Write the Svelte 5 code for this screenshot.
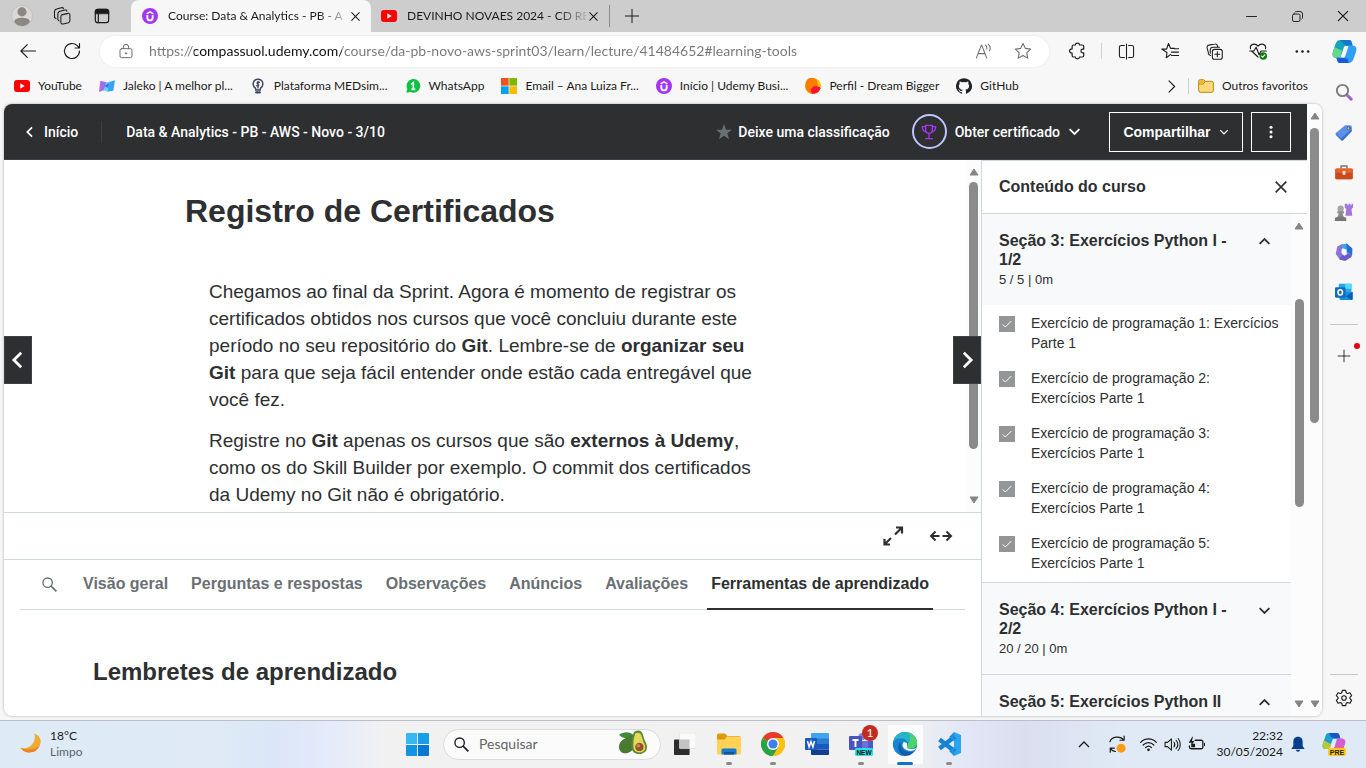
<script>
  const browserTabs = [
    { icon: 'udemy', title: 'Course: Data & Analytics - PB - A', active: true },
    { icon: 'youtube', title: 'DEVINHO NOVAES 2024 - CD RE', active: false }
  ];

  const bookmarks = [
    { icon: 'youtube', label: 'YouTube' },
    { icon: 'jaleko', label: 'Jaleko | A melhor pl...' },
    { icon: 'bulb', label: 'Plataforma MEDsim...' },
    { icon: 'whatsapp', label: 'WhatsApp' },
    { icon: 'microsoft', label: 'Email – Ana Luiza Fr...' },
    { icon: 'udemy', label: 'Início | Udemy Busi...' },
    { icon: 'dream', label: 'Perfil - Dream Bigger' },
    { icon: 'github', label: 'GitHub' }
  ];

  const courseTabs = ['Visão geral', 'Perguntas e respostas', 'Observações', 'Anúncios', 'Avaliações', 'Ferramentas de aprendizado'];
  let activeTab = $state('Ferramentas de aprendizado');

  const sections = [
    {
      title: 'Seção 3: Exercícios Python I - 1/2',
      meta: '5 / 5 | 0m',
      open: true,
      items: [
        'Exercício de programação 1: Exercícios\nParte 1',
        'Exercício de programação 2:\nExercícios Parte 1',
        'Exercício de programação 3:\nExercícios Parte 1',
        'Exercício de programação 4:\nExercícios Parte 1',
        'Exercício de programação 5:\nExercícios Parte 1'
      ]
    },
    { title: 'Seção 4: Exercícios Python I - 2/2', meta: '20 / 20 | 0m', open: false, items: [] },
    { title: 'Seção 5: Exercícios Python II', meta: '', open: true, items: [] }
  ];

  const edgeTools = [
    ['search', 'Pesquisar'],
    ['tag', 'Compras'],
    ['toolbox', 'Ferramentas'],
    ['chess', 'Jogos'],
    ['m365', 'Microsoft 365'],
    ['outlook', 'Outlook']
  ];

  const taskApps = [
    { icon: 'taskview', name: 'Visão de tarefas', running: false },
    { icon: 'explorer', name: 'Explorador de Arquivos', running: true },
    { icon: 'chrome', name: 'Google Chrome', running: true },
    { icon: 'word', name: 'Word', running: false },
    { icon: 'teams', name: 'Teams', running: true },
    { icon: 'edge', name: 'Microsoft Edge', running: true, focused: true },
    { icon: 'vscode', name: 'Visual Studio Code', running: true }
  ];
</script>

{#snippet icon(name, size = 16)}
  <svg width={size} height={size} viewBox="0 0 24 24" fill="none" stroke="currentColor" stroke-width="1.5" stroke-linecap="round" stroke-linejoin="round" aria-hidden="true">
    {#if name === 'udemy'}
      <circle cx="12" cy="12" r="12" fill="#a435f0" stroke="none" />
      <path d="M8 10.500v4a4 4 0 0 0 8 0v-4" stroke="#fff" stroke-width="2.800" stroke-linecap="butt" />
      <path d="M7 8.800 12 5.800l5 3" stroke="#fff" stroke-width="2.200" stroke-linecap="butt" stroke-linejoin="miter" />
    {:else if name === 'youtube'}
      <rect x="0" y="3" width="24" height="18" rx="4.500" fill="#f00" stroke="none" />
      <path d="m9.500 8 6.500 4-6.500 4z" fill="#fff" stroke="none" />
    {:else if name === 'jaleko'}
      <path d="M2 4 11 6.500 8.500 18 0 21z" fill="#a56bef" stroke="none" />
      <path d="M15 6 24 3.500 21.500 19 12 20.500z" fill="#35a4f5" stroke="none" />
      <path d="M11 6.500 16 5.500 13 20.500 7 18z" fill="#5fd9f2" stroke="none" /><path d="m8 12 7-5-1 8z" fill="#3f6ff0" stroke="none" />
    {:else if name === 'bulb'}
      <path d="M8.500 18v-2.500C2 11 4.500 2 12 2s10 9 3.500 13.500V18z" fill="#fff" stroke="#3d4663" stroke-width="2.200" />
      <path d="M9.500 21.500h5" stroke="#3d4663" stroke-width="3.500" />
      <path d="M14.200 6.500c-3-1.500-5 1-2.500 2.500s1.500 4-2 2.500M12 5v10" stroke="#3d4663" stroke-width="2" />
    {:else if name === 'whatsapp'}
      <path d="M2 22 3.500 16.500A10.300 10.300 0 1 1 8 21z" fill="#0dc143" stroke="none" />
      <path d="M9 9.500 12.500 7v10M9.500 17h6" stroke="#fff" stroke-width="2.400" stroke-linecap="butt" stroke-linejoin="miter" />
    {:else if name === 'microsoft'}
      <g stroke="none"><path d="M0 0h11.500v11.500H0z" fill="#f4511e" /><path d="M12.500 0H24v11.500H12.500z" fill="#7cb900" /><path d="M0 12.500h11.500V24H0z" fill="#00a1f1" /><path d="M12.500 12.500H24V24H12.500z" fill="#ffb900" /></g>
    {:else if name === 'dream'}
      <circle cx="12" cy="12" r="12" fill="#ffc400" stroke="none" />
      <path d="M1 9a9 9 0 0 1 18-1c1 7-3 12-10 15.500A12 12 0 0 1 1 9z" fill="#ff7a00" stroke="none" />
      <path d="M10 22c-3-5 1-10 7-9.500 3 .3 5 .500 6.500 3A12 12 0 0 1 10 23.500z" fill="#ff1030" stroke="none" />
    {:else if name === 'github'}
      <path fill="#1f2328" stroke="none" d="M12 .3a12 12 0 0 0-3.800 23.400c.6.100.8-.3.800-.6v-2c-3.300.7-4-1.600-4-1.600-.6-1.400-1.400-1.800-1.400-1.800-1-.7.1-.7.1-.7 1.200 0 1.900 1.200 1.900 1.200 1 1.800 2.800 1.300 3.500 1 0-.8.400-1.300.7-1.600-2.700-.3-5.500-1.300-5.500-6 0-1.200.5-2.300 1.300-3.100-.2-.4-.6-1.600 0-3.200 0 0 1-.3 3.400 1.200a11.500 11.500 0 0 1 6 0c2.300-1.500 3.300-1.200 3.300-1.200.6 1.600.2 2.800 0 3.200.9.800 1.300 1.900 1.300 3.200 0 4.600-2.800 5.600-5.500 5.900.5.400.9 1 .9 2.200v3.300c0 .3.100.7.800.6A12 12 0 0 0 12 .3" />
    {:else if name === 'folder'}
      <path d="M1 8V5a2.500 2.500 0 0 1 2.500-2.500h5L11 5h9.500A2.500 2.500 0 0 1 23 7.500V19a2.500 2.500 0 0 1-2.500 2.500h-17A2.500 2.500 0 0 1 1 19z" fill="#ffd979" stroke="#b98610" />
      <path d="M1 9h7l3-4" stroke="#b98610" /><path d="M2 8V5l1.500-1.500h5l1.200 2L7.500 8z" fill="#f2b82c" stroke="none" />
    {:else if name === 'avatar'}
      <circle cx="12" cy="12" r="11.500" fill="#dad9d6" stroke="#c2c1bf" stroke-width="1" /><circle cx="12" cy="7.500" r="5" fill="#8b8884" stroke="none" /><path d="M3.500 18.500c0-6 17-6 17 0A11 11 0 0 1 12 23a11 11 0 0 1-8.500-4.500" fill="#8b8884" stroke="none" />
    {:else if name === 'workspaces'}
      <path stroke-width="1.400" d="M11.500 10.500 20 8.500a2 2 0 0 1 2.500 2v7.500c0 1.500-.5 2.500-2 2.900l-7 1.700a2.200 2.200 0 0 1-3-2v-8c0-1 .2-1.800 1-2.100M8 18.500 6.500 17V9c0-1.500.5-2.500 2-3l7-2c1.500-.4 2.700.2 3 1.500M4 15.500 2 14V6c0-1.500.5-2.500 2-3l7-2c1.500-.4 2.700.2 3 1.300" />
    {:else if name === 'tabactions'}
      <rect x="2" y="2" width="20" height="20" rx="3.500" stroke-width="1.800" /><path d="M2 8V5.500A3.500 3.500 0 0 1 5.500 2h13A3.500 3.500 0 0 1 22 5.500V8z" fill="currentColor" /><path d="M6.500 8v14" stroke-width="1.800" />
    {:else if name === 'close'}
      <path d="m5 5 14 14M19 5 5 19" stroke-width="1.900" />
    {:else if name === 'bigclose'}
      <path d="m4 4 16 16M20 4 4 20" stroke-width="2.400" stroke-linecap="butt" />
    {:else if name === 'plus'}
      <path d="M12 2v20M2 12h20" />
    {:else if name === 'minimize'}
      <path d="M4 12h16" />
    {:else if name === 'restore'}
      <rect x="4" y="8" width="12" height="12" rx="2.500" /><path d="M8 5c.5-.8 1-1 2-1h6a4 4 0 0 1 4 4v6c0 1-.3 1.500-1 2" />
    {:else if name === 'back'}
      <path d="M22 12H3M11 3.500 2.500 12l8.500 8.500" />
    {:else if name === 'reload'}
      <path d="M22 12a10 10 0 1 1-3-7.100L22 8M22 2v6h-6" />
    {:else if name === 'lock'}
      <rect x="3" y="8.500" width="18" height="13.500" rx="2.500" /><path d="M8 8.500V6a4 4 0 0 1 8 0v2.500" /><circle cx="12" cy="15.500" r="1" fill="currentColor" />
    {:else if name === 'read'}
      <path d="M2 21 9 3h.5l7 18M4.500 15h9.500M15 3c1.500 1.500 2 3.500 1.500 5.500M18.500 1.500C21.500 4 22 8 20.500 11" />
    {:else if name === 'star'}
      <path d="m12 2 3.100 6.500 7 1-5.100 4.900 1.300 7.100-6.300-3.400-6.300 3.400L7 14.400 1.900 9.500l7-1z" />
    {:else if name === 'starfill'}
      <path fill="currentColor" stroke="none" d="m12 0 3.200 8.500H24l-7 5.300 2.600 9.200L12 17.500 4.400 23 7 13.800 0 8.500h8.800z" />
    {:else if name === 'puzzle'}
      <path stroke-width="1.600" d="M7.500 4h2.300c.2-3.300 5.400-3.300 5.600 0H19a2 2 0 0 1 2 2v3.500h-1.500c-3 0-3 5 0 5H21V18a2 2 0 0 1-2 2h-3.600c-.2 3.300-5.400 3.300-5.600 0H7.500a2 2 0 0 1-2-2v-3.200c-4.500.2-4.500-5.800 0-5.600V6a2 2 0 0 1 2-2z" />
    {:else if name === 'split'}
      <path d="M9 3.500H4.500A2.500 2.500 0 0 0 2 6v12a2.500 2.500 0 0 0 2.500 2.500H9M15 3.500h4.500A2.500 2.500 0 0 1 22 6v12a2.500 2.500 0 0 1-2.500 2.500H15M12 1.500v21" />
    {:else if name === 'favlist'}
      <path d="M13 16.500 7 21l1-7L1 9.500h6.500L10 2l2.800 6.500H18M14 13.500h9.500M14 18h9.500M18 9h5.500" />
    {:else if name === 'collections'}
      <rect x="9" y="9" width="14" height="14" rx="3" /><path d="M16 12.500v7M12.500 16h7" /><path d="M6.500 17.500 5 17a3 3 0 0 1-1.700-3.500L1.500 6.500A3 3 0 0 1 4 3l8.500-1.500A3 3 0 0 1 16 3.500l.7 2.500M6 14.500V10a4 4 0 0 1 4-4h9" />
    {:else if name === 'health'}
      <path d="M12 20 3.500 12M2 9c-1.500-6 6-8.500 10-3.500C16 .5 23.500 3 22 9M1 12h5.500L9.500 7l4 10 2.500-5h7" /><circle cx="19" cy="18.500" r="5" fill="#107c10" stroke="none" /><path d="m16.800 18.700 1.500 1.500 2.700-3" stroke="#fff" />
    {:else if name === 'dots'}
      <g fill="currentColor" stroke="none"><circle cx="4" cy="12" r="1.800" /><circle cx="12" cy="12" r="1.800" /><circle cx="20" cy="12" r="1.800" /></g>
    {:else if name === 'vdots'}
      <g fill="currentColor" stroke="none"><circle cx="12" cy="4" r="2.600" /><circle cx="12" cy="12" r="2.600" /><circle cx="12" cy="20" r="2.600" /></g>
    {:else if name === 'copilot'}
      <g stroke="none"><path d="M8 1h8.500c1.500 0 2 1 2.500 2.500l.8 3H14c-2 0-2.500 1-3 2.500L8 18H4C.5 18 0 15.500 1 12L3.500 4.500C4.500 2 6 1 8 1" fill="#14a5ba" /><path d="M1 12 2.500 8l7 3L8 18H4C.5 18 0 15.500 1 12" fill="#65d88c" /><path d="M8 1h8.500c1.500 0 2 1 2.500 2.500l.8 3H14L11 4.500z" fill="#1279cf" /><path d="M16 23H7.500C6 23 5.500 22 5 20.500L4.200 18H10c2 0 2.500-1 3-2.500l3-9h4c3.500 0 4 2.500 3 6l-2.500 7c-1 2.500-2.500 3.500-4.500 3.500" fill="#2f9ff1" /><path d="M16 23H7.500C6 23 5.500 22 5 20.500L4.200 18H10l5 1z" fill="#175bd6" /></g>
    {:else if name === 'copilotpre'}
      <g stroke="none"><path d="M7 1h8c1.500 0 2 1 2.500 2.500l.8 3H13c-2 0-2.500 1-3 2.500l-2.500 8H4C.5 17 0 15 1 11.500l2.300-7C4 2 5 1 7 1" fill="#1a9fd1" /><path d="M7 1h8c1.500 0 2 1 2.500 2.500l.8 3H13L9 5z" fill="#1857c9" /><path d="m1 11.500 1-3 7 3.500-1.500 5H4C.5 17 0 15 1 11.500" fill="#b3cb3a" /><path d="M15 21H9l3.500-6 2.500-8.500h5c3 0 4 2.500 3 5.500l-2 6c-1 2.500-3 3-6 3" fill="#d460cf" /><path d="m13 15 9-.5-1 4c-1 2-3 2.500-6 2.500H9z" fill="#ee6a7a" /><rect x="6" y="16" width="18" height="8" rx="2" fill="#ffc91c" /></g>
      <text x="15" y="22.700" font-family="Liberation Sans" font-size="7" font-weight="700" fill="#222" stroke="none" text-anchor="middle">PRE</text>
    {:else if name === 'search'}
      <path d="m16 16 5.500 5.500" stroke="#9b62d6" stroke-width="4" /><circle cx="10" cy="10" r="7.500" stroke="#7d7d7d" stroke-width="2.600" />
    {:else if name === 'tag'}
      <path d="M13.500 3H20a2.500 2.500 0 0 1 2.500 2.500V11L11 22.500a2 2 0 0 1-3 0L1.500 16a2 2 0 0 1 0-3z" fill="#5c92e6" stroke="none" /><path d="M1.500 14 8 20.500 22 8v3L11 22.500a2 2 0 0 1-3 0L1.500 16z" fill="#3b70cc" stroke="none" /><circle cx="18" cy="7" r="2" fill="#f2c14a" stroke="#294f95" stroke-width="1" />
    {:else if name === 'toolbox'}
      <path d="M8 7V4h8v3" stroke="#777" stroke-width="2" /><rect x="0" y="7" width="24" height="14.500" rx="2" fill="#e8602b" stroke="none" /><path d="M1 13h22v6.500a2 2 0 0 1-2 2H3a2 2 0 0 1-2-2z" fill="#c94a1c" stroke="none" /><rect x="10" y="10.500" width="4" height="5" rx="1" fill="#f3e5dc" stroke="none" />
    {:else if name === 'chess'}
      <g stroke="none"><path d="M14 1h2.500v2H18V1h2.500v2H22V1h2v5l-2 2 1 9H14l1-9-2-2V1z" fill="#a277dd" /><circle cx="7.500" cy="7.500" r="4.200" fill="#a5a5a5" /><path d="M3 11h9v2.500h-2L11.500 19h-8L5 13.500H3z" fill="#8b8b8b" /><path d="M0 19.500q7.500-3 15 0V24H0z" fill="#777" /></g>
    {:else if name === 'm365'}
      <path d="M9 2 16 .5l7 7-.5 9.500-7-3V9l-5-2-5.500 4V5z" fill="#39a4e8" stroke="none" /><path d="M10 1 3 4.500 1 14.500 7 23l3.500-6-2-5 .5-4z" fill="#8a74d8" stroke="none" /><path d="M6 22 9.500 15l3 2 4-2.500 6 .500-.5 3.500-8.500 5.500z" fill="#6a5bcb" stroke="none" /><path d="m15 .5 8 6.500v9l-7-4V8z" fill="#2b6bd4" stroke="none" />
    {:else if name === 'outlook'}
      <g stroke="none"><rect x="5" y="1" width="17" height="13" rx="1" fill="#28a8ea" /><path d="M13.500 1H22v7h-8.500z" fill="#50d9ff" /><path d="M6 12h17.500v9a1.500 1.500 0 0 1-1.500 1.500H7.500A1.500 1.500 0 0 1 6 21z" fill="#1490df" /><path d="m23.500 12-9 5.500 7.500 5 1.500-.5z" fill="#0a5bb5" /><rect x="0" y="5.500" width="14" height="14" rx="1.500" fill="#0f6cbd" /></g><ellipse cx="7" cy="12.500" rx="3" ry="3.400" stroke="#fff" stroke-width="2" />
    {:else if name === 'gear'}
      <circle cx="12" cy="12" r="3" /><path d="m9.800 1.800h4.400l.8 3.200 1.800 1 3.200-.9 2.200 3.800-2.300 2.400v1.400l2.300 2.400-2.200 3.800-3.200-.9-1.800 1-.8 3.200H9.800L9 19l-1.800-1-3.200.9-2.200-3.800 2.300-2.400v-1.400L1.800 8.900 4 5.100l3.200.9L9 5z" />
    {:else if name === 'left'}
      <path d="m15.500 4-8 8 8 8" stroke-width="3" stroke-linecap="butt" stroke-linejoin="miter" />
    {:else if name === 'right'}
      <path d="m8.500 4 8 8-8 8" stroke-width="3" stroke-linecap="butt" stroke-linejoin="miter" />
    {:else if name === 'thinright'}
      <path d="m8 3 9 9-9 9" stroke-width="1.800" />
    {:else if name === 'down'}
      <path d="m3 7.500 9 9 9-9" stroke-width="3.200" stroke-linecap="butt" stroke-linejoin="miter" />
    {:else if name === 'up'}
      <path d="m3 16.500 9-9 9 9" stroke-width="3.200" stroke-linecap="butt" stroke-linejoin="miter" />
    {:else if name === 'trophy'}
      <path d="M7 2h10v7a5 5 0 0 1-10 0zM7 4H2c0 5 1.500 7 6 8M17 4h5c0 5-1.500 7-6 8M12 14v7M7 22h10" stroke="#a435f0" stroke-width="2" stroke-linejoin="miter" />
    {:else if name === 'expand'}
      <path d="M15 3.500h6v6M20.500 4 14 10.500M9 20.500H3.500V15M4 20l6-6" stroke-width="2.200" stroke-linecap="butt" stroke-linejoin="miter" />
    {:else if name === 'wide'}
      <path d="M10.500 12H2.500M6.500 7.500 2 12l4.500 4.500M13.500 12h8M17.500 7.500 22 12l-4.500 4.500" stroke-width="2" stroke-linecap="butt" stroke-linejoin="miter" />
    {:else if name === 'magnify'}
      <circle cx="9" cy="9" r="7.500" stroke-width="2.200" /><path d="m14 14 9 9" stroke-width="2.800" stroke-linecap="butt" />
    {:else if name === 'check'}
      <path d="m5.500 12.500 4 4L18.500 7.500" stroke="#fff" stroke-width="1.500" stroke-linecap="butt" stroke-linejoin="miter" />
    {:else if name === 'moon'}
      <path d="M15.500.5A12 12 0 0 1 .5 16a12 12 0 0 0 21-2.500C24.500 8 21 2 15.500.5" fill="#f0ab35" stroke="none" /><path d="M.5 16a12 12 0 0 0 21-2.500C17 18 8 19 .5 16" fill="#ec8326" stroke="none" />
    {:else if name === 'windows'}
      <g stroke="none" fill="#0a84da"><path d="M0 1a1 1 0 0 1 1-1h10.500v11.500H0z" fill="#36b8f3" /><path d="M12.500 0H23a1 1 0 0 1 1 1v10.500H12.500z" fill="#189de7" /><path d="M0 12.500h11.500V24H1a1 1 0 0 1-1-1z" fill="#1294e2" /><path d="M12.500 12.500H24V23a1 1 0 0 1-1 1H12.500z" fill="#0878d0" /></g>
    {:else if name === 'avocado'}
      <g stroke="none"><path d="M0 4C4 1 10 1 13 5c-4 3-9 3-13-1" fill="#3d8b3d" /><path d="M12 4C5 7 0 9 0 14.500c0 6 7 7 11 3 4-4 1-8 1-13.500" fill="#4a7a31" /><path d="M13 1.500c4-2 7-1 8 4 1 4 3 6 3 9.500 0 7-12 7.500-13 1-.5-5 0-11 2-14.500" fill="#5d8a2e" /><path d="M14 3c3-1.500 5 0 6 4 .8 4 2.500 5 2.500 8 0 5.500-9.500 5.500-10 .5-.3-4 0-9.500 1.500-12.500" fill="#e3d95d" /><circle cx="17.500" cy="14.500" r="3.600" fill="#96532a" /><circle cx="16.500" cy="13.500" r="1.500" fill="#c98a58" /></g>
    {:else if name === 'taskview'}
      <rect x="0" y="7" width="17" height="17" rx="1" fill="#2d2d2d" stroke="none" /><rect x="6" y="0" width="18" height="17" rx="1" fill="#fafafa" stroke="#dcdcdc" stroke-width=".6" /><path d="M6 7h11v10H6z" fill="#c4c4c4" stroke="none" />
    {:else if name === 'explorer'}
      <g stroke="none"><path d="M0 3a1.500 1.500 0 0 1 1.500-1.500H8L10.500 4H22a1.500 1.500 0 0 1 1.500 1.500V10H0z" fill="#dd9b0c" /><path d="M0 7.500h7.500L10 4.500h12.500A1.500 1.500 0 0 1 24 6v15a1.500 1.500 0 0 1-1.500 1.500h-21A1.500 1.500 0 0 1 0 21z" fill="#ffd154" /><path d="M4.500 22.500V18A1.500 1.500 0 0 1 6 16.500h12a1.500 1.500 0 0 1 1.500 1.500v4.500z" fill="#1179ce" /><path d="M7 20h10v2.500H7z" fill="#0a559e" /></g>
    {:else if name === 'chrome'}
      <g stroke="none"><circle cx="12" cy="12" r="12" fill="#fbc116" /><path d="M12 12 1.600 6a12 12 0 0 1 20.800 0z" fill="#e33b2e" /><path d="M1.600 6 12 24A12 12 0 0 1 1.600 6" fill="#26a147" /><path d="M1.600 6 7 15.500l5 8.500 5.500-9z" fill="#26a147" /><path d="M12 6h10.400A12 12 0 0 1 12 24l5.300-9z" fill="#fbc116" /><circle cx="12" cy="12" r="6" fill="#fff" /><circle cx="12" cy="12" r="4.600" fill="#3e7fee" /></g>
    {:else if name === 'word'}
      <g stroke="none"><path d="M7 1h16a1 1 0 0 1 1 1v5H6V2a1 1 0 0 1 1-1" fill="#41a5ee" /><path d="M6 6.500h18V12H6z" fill="#2b7cd3" /><path d="M6 12h18v5.500H6z" fill="#185abd" /><path d="M6 17.500h18V22a1 1 0 0 1-1 1H7a1 1 0 0 1-1-1z" fill="#103f91" /><rect x="0" y="6" width="12" height="12" rx="1" fill="#185abd" /></g><path d="m2.500 9 1.600 6L6 9.500 7.900 15l1.600-6" stroke="#fff" stroke-width="1.500" stroke-linecap="butt" stroke-linejoin="miter" />
    {:else if name === 'teams'}
      <g stroke="none"><circle cx="13" cy="4.500" r="3.500" fill="#7b83eb" /><circle cx="21" cy="5.500" r="2.500" fill="#5059c9" /><path d="M17 9h7v7a4 4 0 0 1-7 2z" fill="#5059c9" /><path d="M7 9h12v8a6 6 0 0 1-12 2z" fill="#6a70dc" /><rect x="0" y="4" width="13" height="14" rx="1" fill="#4b53bc" /><rect x="6" y="16" width="18" height="8" rx="1.500" fill="#2be0e6" /></g><path d="M3.500 8h6M6.500 8v7" stroke="#fff" stroke-width="1.900" stroke-linecap="butt" /><text x="15" y="22.500" font-family="Liberation Sans" font-size="6.500" font-weight="700" fill="#111" stroke="none" text-anchor="middle">NEW</text>
    {:else if name === 'edge'}
      <g stroke="none"><circle cx="12" cy="12" r="12" fill="#0d5fae" /><path d="M.5 10C2 3 7 0 12 0c7 0 12 5 12 10.500 0 4-3 6-6.500 6-2.500 0-3.500-1-3.500-2 0-.7.8-1 .8-2.500C14.800 9 12 7 8.500 7 5 7 2 8 .5 10" fill="#24b5c8" /><path d="M16 1c5 2 8 6 8 9.500 0 4-3 6-6.500 6-2.500 0-3.500-1-3.500-2 0-.7.8-1 .8-2.500 3-2 3-7 1.200-11" fill="#4ed36c" /><path d="M.5 10C2 7 5 6 8.500 6.500c4 .5 6.300 3 6.300 5.500 0 1.500-.8 1.800-.8 2.500 0 3 6 3.500 9.500 1.500l-2.500 4C12 21 8 17 8 13c0-1 .3-2 1-2.700C5 10.500 3 17 9 23.500 3 22-1 16 .5 10" fill="#1686d4" /><path d="M14 14.500c0 3 6 3 8.500 1.500.5 0 .5.800 0 1.300C18 21 10 18 9.500 13c0-1.300.5-2.500 1.500-3l3 1z" fill="#f7f7f7" /></g>
    {:else if name === 'vscode'}
      <path d="M17 0 24 3v18l-7 3z" fill="#2aa5f2" stroke="none" /><path d="M18 4.500 2.500 16.500M18 19.500 2.500 7.500" stroke="#1584d0" stroke-width="4.500" stroke-linecap="butt" /><path d="m17 0-5 5 5 4zM17 24l-5-5 5-4z" fill="#1b93e0" stroke="none" />
    {:else if name === 'sync'}
      <path d="M2.500 9C5 2 16 .5 21 6.500M21.500 1.500v5.500H16M10 22c-3 0-5-1.500-6.500-4M3 23v-5.500h5.500" stroke-width="1.600" /><circle cx="17.500" cy="17.500" r="6" fill="#ff9a14" stroke="none" />
    {:else if name === 'wifi'}
      <path d="M1 9c6-6.500 16-6.500 22 0M4.500 12.700c4.200-4.500 10.800-4.500 15 0M8 16.300c2.500-2.500 5.500-2.500 8 0" stroke-width="1.700" /><circle cx="12" cy="19.500" r="1.900" fill="currentColor" stroke="none" />
    {:else if name === 'volume'}
      <path d="M1.500 9H5l5.500-5v16L5 15H1.500zM14 8.500c1.500 2 1.500 5 0 7M17 6c3 3.500 3 8.500 0 12M20 3.500c4 5 4 12 0 17" stroke-width="1.500" />
    {:else if name === 'battery'}
      <path d="M10 6h8.500A2.500 2.500 0 0 1 21 8.500v7a2.500 2.500 0 0 1-2.500 2.500h-14A2.500 2.500 0 0 1 2 15.500V14M23.500 10.500v3" stroke-width="1.800" /><path d="M5 11h5v5H4.500z" fill="currentColor" stroke="none" /><path d="M6 1 1 9.500h4l-1 5L9 7H5.500L7 1z" fill="currentColor" stroke="none" />
    {:else if name === 'bell'}
      <path d="M12 1C7 1 5 4.500 5 9v6l-3 4.500h20L19 15V9c0-4.500-2-8-7-8M9 20.500h6a3 3 0 0 1-6 0" fill="#063e8d" stroke="none" />
    {/if}
  </svg>
{/snippet}

{#snippet scrollbar(before, thumb, after)}
  <div class="scrollbar" aria-hidden="true">
    <svg width="10" height="8" viewBox="0 0 10 8"><path d="M5 1 9 7H1z" fill="#858585" stroke="#858585" stroke-linejoin="round" /></svg>
    <div class="track">
      <span style="flex-grow:{before}"></span>
      <span class="thumb" style="flex-grow:{thumb}"></span>
      <span style="flex-grow:{after}"></span>
    </div>
    <svg width="10" height="8" viewBox="0 0 10 8"><path d="M5 7 9 1H1z" fill="#858585" stroke="#858585" stroke-linejoin="round" /></svg>
  </div>
{/snippet}

<div class="desktop">
  <header class="titlebar">
    <div class="profile">
      <button aria-label="Perfil">{@render icon('avatar', 22)}</button>
      <button aria-label="Workspaces">{@render icon('workspaces', 18)}</button>
      <button aria-label="Menu de ações da guia">{@render icon('tabactions', 16)}</button>
    </div>
    {#each browserTabs as tab}
      <div class="browser-tab" class:active={tab.active}>
        {@render icon(tab.icon, 16)}
        <span class="tab-title">{tab.title}</span>
        <button aria-label="Fechar guia">{@render icon('close', 13)}</button>
      </div>
    {/each}
    <button class="newtab" aria-label="Nova guia">{@render icon('plus', 16)}</button>
    <div class="window-controls">
      <button aria-label="Minimizar">{@render icon('minimize', 15)}</button>
      <button aria-label="Restaurar">{@render icon('restore', 15)}</button>
      <button aria-label="Fechar">{@render icon('close', 16)}</button>
    </div>
  </header>

  <nav class="toolbar">
    <div class="nav-buttons">
      <button aria-label="Voltar">{@render icon('back', 18)}</button>
      <button aria-label="Atualizar">{@render icon('reload', 18)}</button>
    </div>
    <div class="address">
      <button aria-label="Informações do site">{@render icon('lock', 16)}</button>
      <input aria-label="Barra de endereços" value="https://compassuol.udemy.com/course/da-pb-novo-aws-sprint03/learn/lecture/41484652#learning-tools" spellcheck="false" />
      <button aria-label="Ler em voz alta">{@render icon('read', 17)}</button>
      <button aria-label="Adicionar aos favoritos">{@render icon('star', 18)}</button>
    </div>
    <div class="tools">
      <button aria-label="Extensões">{@render icon('puzzle', 18)}</button>
      <span class="divider"></span>
      <button aria-label="Dividir tela">{@render icon('split', 17)}</button>
      <button aria-label="Favoritos">{@render icon('favlist', 18)}</button>
      <button aria-label="Coleções">{@render icon('collections', 17)}</button>
      <button aria-label="Desempenho">{@render icon('health', 18)}</button>
      <button aria-label="Mais">{@render icon('dots', 17)}</button>
      <button aria-label="Copilot">{@render icon('copilot', 25)}</button>
    </div>
  </nav>

  <div class="browser-body">
    <div class="content">
      <nav class="bookmarks" aria-label="Favoritos">
        {#each bookmarks as b}
          <a href="#{b.icon}">{@render icon(b.icon, 16)}<span>{b.label}</span></a>
        {/each}
        <div class="overflow">
          <button aria-label="Mais favoritos">{@render icon('thinright', 15)}</button>
          <span class="divider"></span>
          <button class="others">{@render icon('folder', 16)}<span>Outros favoritos</span></button>
        </div>
      </nav>

      <div class="page">
        <div class="course">
          <header class="course-header">
            <a class="home" href="#inicio">{@render icon('left', 14)}Início</a>
            <a class="course-name" href="#curso">Data &amp; Analytics - PB - AWS - Novo - 3/10</a>
            <button class="rate">{@render icon('starfill', 16)}Deixe uma classificação</button>
            <button class="certificate"><span class="ring">{@render icon('trophy', 16)}</span>Obter certificado{@render icon('down', 13)}</button>
            <button class="outlined share">Compartilhar{@render icon('down', 10)}</button>
            <button class="outlined more" aria-label="Mais opções">{@render icon('vdots', 14)}</button>
          </header>

          <div class="columns">
            <main>
              <section class="lecture">
                <article>
                  <h1>Registro de Certificados</h1>
                  <div class="text">
                    <p>Chegamos ao final da Sprint. Agora é momento de registrar os certificados obtidos nos cursos que você concluiu durante este período no seu repositório do <strong>Git</strong>. Lembre-se de <strong>organizar seu Git</strong> para que seja fácil entender onde estão cada entregável que você fez.</p>
                    <p>Registre no <strong>Git</strong> apenas os cursos que são <strong>externos à Udemy</strong>, como os do Skill Builder por exemplo. O commit dos certificados da Udemy no Git não é obrigatório.</p>
                  </div>
                </article>
                {@render scrollbar(0, 268, 42)}
                <button class="step prev" aria-label="Anterior">{@render icon('left', 22)}</button>
                <button class="step next" aria-label="Próximo">{@render icon('right', 22)}</button>
              </section>
              <div class="controls">
                <button aria-label="Tela cheia">{@render icon('expand', 24)}</button>
                <button aria-label="Expandir exibição">{@render icon('wide', 24)}</button>
              </div>
              <div class="tabs" role="tablist">
                <button class="find" aria-label="Pesquisar no curso">{@render icon('magnify', 15)}</button>
                {#each courseTabs as t}
                  <button role="tab" aria-selected={activeTab === t} class:selected={activeTab === t} onclick={() => (activeTab = t)}>{t}</button>
                {/each}
              </div>
              <h2>Lembretes de aprendizado</h2>
            </main>

            <aside>
              <div class="aside-head">
                <h3>Conteúdo do curso</h3>
                <button aria-label="Fechar conteúdo">{@render icon('bigclose', 16)}</button>
              </div>
              <div class="aside-body">
                <div class="sections">
                  {#each sections as s, si}
                    <button class="section-head" aria-expanded={s.open}>
                      <span class="section-title">{s.title}</span>
                      {@render icon(s.open ? 'up' : 'down', 13)}
                      {#if s.meta}<span class="meta">{s.meta}</span>{/if}
                    </button>
                    {#if s.items.length}
                      <ul>
                        {#each s.items as item, i}
                          <li>
                            <span class="tick"><input type="checkbox" id="item-{si}-{i}" checked />{@render icon('check', 16)}</span>
                            <label for="item-{si}-{i}">{item}</label>
                          </li>
                        {/each}
                      </ul>
                    {/if}
                  {/each}
                </div>
                {@render scrollbar(63, 209, 188)}
              </div>
            </aside>
          </div>
        </div>
        {@render scrollbar(2, 296, 272)}
      </div>
    </div>

    <aside class="edgebar" aria-label="Barra lateral">
      {#each edgeTools as [name, label]}
        <button aria-label={label}>{@render icon(name, 18)}</button>
      {/each}
      <hr />
      <button class="add" aria-label="Personalizar">{@render icon('plus', 14)}<i></i></button>
      <hr class="bottom" />
      <button aria-label="Configurações">{@render icon('gear', 18)}</button>
    </aside>
  </div>

  <footer class="taskbar">
    <button class="weather">{@render icon('moon', 22)}<span>18°C<small>Limpo</small></span></button>
    <div class="apps">
      <button class="app" aria-label="Iniciar">{@render icon('windows', 23)}</button>
      <label class="search">{@render icon('magnify', 15)}<input type="search" placeholder="Pesquisar" aria-label="Pesquisar" />{@render icon('avocado', 28)}</label>
      {#each taskApps as app}
        <button class="app" class:running={app.running} class:focused={app.focused} aria-label={app.name}>
          {@render icon(app.icon, app.icon === 'taskview' ? 22 : 24)}
          {#if app.icon === 'teams'}<b>1</b>{/if}
        </button>
      {/each}
    </div>
    <div class="tray">
      <button aria-label="Mostrar ícones ocultos"><svg width="12" height="8" viewBox="0 0 12 8" fill="none" stroke="currentColor" stroke-width="1.300"><path d="m1 7 5-5 5 5" /></svg></button>
      <button class="sync" aria-label="Atualização">{@render icon('sync', 18)}</button>
      <button class="status" aria-label="Rede, volume e bateria">{@render icon('wifi', 17)}{@render icon('volume', 17)}{@render icon('battery', 17)}</button>
      <button class="clock"><span>22:32</span><span>30/05/2024</span></button>
      <button aria-label="Notificações">{@render icon('bell', 16)}</button>
      <button class="pilot" aria-label="Copilot">{@render icon('copilotpre', 24)}</button>
    </div>
  </footer>
</div>

<style>
  :global(body) { margin: 0; }
  .desktop { height: 100vh; display: flex; flex-direction: column; overflow: hidden; background: #f7f7f7; color: #1b1b1b; font: 12px/16px Lato, "Open Sans", sans-serif; }
  .desktop * { box-sizing: border-box; }
  button { display: inline-flex; align-items: center; justify-content: center; padding: 0; border: 0; background: none; color: inherit; font: inherit; flex: none; }
  a { color: inherit; text-decoration: none; }
  svg { flex: none; display: block; }
  input { font: inherit; border: 0; outline: 0; background: none; padding: 0; min-width: 0; }
  h1, h2, h3, p, ul { margin: 0; padding: 0; }

  .titlebar { display: flex; align-items: stretch; height: 32px; flex: none; background: #cdcdcd; }
  .profile { display: flex; align-items: center; width: 131px; padding-left: 11px; }
  .profile button { width: 22px; margin-right: 18px; }
  .profile button + button + button { margin-right: 0; }
  .browser-tab { display: flex; align-items: center; width: 239px; padding: 0 9px 0 11px; }
  .browser-tab.active { width: 240px; background: #f7f7f7; border-radius: 8px 8px 0 0; }
  .browser-tab:not(.active) { border-right: 1px solid #8d8d8d; border-image: linear-gradient(transparent 6px, #8d8d8d 6px 26px, transparent 26px) 1; padding-left: 10px; }
  .tab-title { flex: 1; margin: 0 1px 0 10px; overflow: hidden; white-space: nowrap; mask-image: linear-gradient(90deg, #000 150px, transparent 184px); }
  .newtab { width: 44px; }
  .window-controls { display: flex; margin-left: auto; }
  .window-controls button { width: 46px; }

  .toolbar { display: flex; align-items: center; height: 38px; flex: none; }
  .nav-buttons { display: flex; width: 100px; padding-left: 6px; }
  .nav-buttons button { width: 44px; }
  .address { flex: 1; display: flex; align-items: center; height: 31px; padding: 0 7px 0 8px; border-radius: 16px; background: #fff; color: #6e6e6e; box-shadow: 0 0 3px rgba(0, 0, 0, 0.08); }
  .address button { width: 39px; }
  .address button:first-child { width: 36px; margin-right: 5px; }
  .address input { flex: 1; font-size: 14px; line-height: 20px; color: transparent; background: linear-gradient(90deg, #767676 45px, #111 45px 193px, #767676 193px) text; }
  .tools { display: flex; align-items: center; padding: 0 2px 0 8px; }
  .tools button { width: 44px; height: 30px; }
  .tools button:first-child { width: 40px; }
  .tools button:last-child { width: 40px; }
  .tools .divider { margin: 0 2px 0 4px; }
  .divider { width: 1px; height: 16px; background: #cfcfcf; }

  .browser-body { flex: 1; min-height: 0; display: flex; }
  .content { flex: 1; min-width: 0; display: flex; flex-direction: column; padding-bottom: 4px; }
  .bookmarks { display: flex; align-items: center; gap: 17px; height: 32px; flex: none; padding: 0 14px; white-space: nowrap; }
  .bookmarks a, .others { display: flex; align-items: center; gap: 8px; }
  .overflow { display: flex; align-items: center; gap: 9px; margin-left: auto; }

  .page { flex: 1; min-height: 0; display: flex; margin: 2px 0 0 4px; border-radius: 8px; overflow: hidden; background: #fff; box-shadow: 0 0 3px rgba(0, 0, 0, 0.3); }
  .course { flex: 1; min-width: 0; display: flex; flex-direction: column; color: #2d2f31; font-family: "Liberation Sans", Arial, sans-serif; }
  .scrollbar { width: 15px; flex: none; display: flex; flex-direction: column; align-items: center; padding: 8px 0; background: #fcfcfc; }
  .track { flex: 1; width: 9px; display: flex; flex-direction: column; margin: 6px 0 5px; }
  .track span { flex-basis: 0; }
  .thumb { background: #8b8b8b; border-radius: 5px; }

  .course-header { display: flex; align-items: center; height: 56px; flex: none; padding: 0 16px 0 19px; background: #2d2f31; border-bottom: 1px solid #3e4143; color: #fff; font: 500 14px/20px Roboto, "Liberation Sans", sans-serif; }
  .home { display: flex; align-items: center; gap: 7px; padding-right: 23px; }
  .course-name { padding-left: 24px; border-left: 1px solid #3e4143; line-height: 22px; margin-right: auto; }
  .rate { gap: 6px; margin-right: 22px; }
  .rate :global(svg) { color: #6a6f73; }
  .certificate { gap: 8px; margin-right: 28px; }
  .ring { display: grid; place-items: center; width: 35px; height: 35px; border: 2px solid #c0c4fc; border-radius: 50%; }
  .outlined { height: 40px; border: 1px solid #fff; font-weight: 700; }
  .share { width: 134px; gap: 8px; margin-right: 8px; font-family: "Liberation Sans", sans-serif; }
  .more { width: 40px; }

  .columns { flex: 1; min-height: 0; display: flex; }
  main { flex: 1; min-width: 0; overflow: hidden; }
  .lecture { position: relative; display: flex; height: 353px; border-bottom: 1px solid #d1d7dc; }
  article { flex: 1; min-width: 0; overflow: hidden; padding: 31px 16px 0; }
  article > * { max-width: 600px; margin: 0 auto; }
  h1 { font-size: 32px; line-height: 40px; }
  .text { padding: 47px 24px 0; font-size: 19px; line-height: 27px; }
  .text p { margin-bottom: 14px; }
  .step { position: absolute; top: 50%; width: 28px; height: 48px; background: #2d2f31; color: #fff; }
  .lecture .step { border: 1px solid #3e4143; }
  .step.prev { left: 0; }
  .step.next { right: 0; }
  .controls { display: flex; justify-content: flex-end; height: 47px; padding-right: 16px; border-bottom: 1px solid #d1d7dc; }
  .controls button { width: 48px; }
  .tabs { display: flex; gap: 15px; height: 50px; margin: 0 16px; padding-left: 19px; border-bottom: 1px solid #d1d7dc; color: #6a6f73; font-size: 16px; line-height: 20px; font-weight: 700; white-space: nowrap; }
  .tabs button { margin-bottom: -1px; padding: 0 4px; border-bottom: 2px solid transparent; }
  .tabs .find { width: 20px; padding: 0; margin-right: 5px; }
  .tabs .selected { color: #2d2f31; border-color: #2d2f31; }
  h2 { padding: 46px 89px 0; font-size: 24px; line-height: 32px; }

  aside { flex: none; }
  .columns aside { width: 326px; display: flex; flex-direction: column; border-left: 1px solid #d1d7dc; }
  .aside-head { display: flex; align-items: center; justify-content: space-between; height: 54px; flex: none; padding: 0 18px 0 17px; border-top: 1px solid #d1d7dc; border-bottom: 1px solid #d1d7dc; }
  h3 { font-size: 16px; line-height: 20px; }
  .aside-body { flex: 1; min-height: 0; display: flex; }
  .aside-body > :global(.scrollbar) { width: 16px; }
  .sections { flex: 1; min-width: 0; overflow: hidden; }
  .section-head { display: grid; grid-template-columns: 1fr 13px; column-gap: 26px; align-items: start; width: 100%; padding: 17px 20px 16px 17px; background: #f7f9fa; text-align: left; }
  ul + .section-head, .section-head + .section-head { border-top: 1px solid #d1d7dc; }
  .section-head > :global(svg) { margin-top: 4px; }
  .section-title { font-size: 16px; line-height: 19px; font-weight: 700; }
  .meta { grid-column: 1; margin-top: 2px; font-size: 13px; line-height: 18px; }
  ul { list-style: none; padding-bottom: 2px; background: #fff; }
  li { display: flex; gap: 16px; padding: 8px 0 7px 17px; font-size: 14px; line-height: 20px; }
  li label { white-space: pre-line; }
  .tick { display: grid; width: 16px; height: 16px; margin-top: 3px; background: #949596; }
  .tick > :global(*) { grid-area: 1 / 1; }
  .tick input { appearance: none; width: 16px; height: 16px; margin: 0; }

  .edgebar { width: 44px; display: flex; flex-direction: column; align-items: center; padding: 2px 0; }
  .edgebar button { width: 40px; height: 40px; }
  .edgebar hr { width: 28px; margin: 12px 0 11px; border: 0; border-top: 1px solid #c9c9c9; }
  .edgebar .bottom { margin: auto 0 3px; }
  .add { position: relative; }
  .add i { position: absolute; top: 7px; right: 4px; width: 6px; height: 6px; border-radius: 50%; background: #e3000b; }

  .taskbar { display: grid; grid-template-columns: 1fr auto 1fr; align-items: center; height: 48px; flex: none; padding-bottom: 2px; border-top: 1px solid #bcc0c6; background: linear-gradient(90deg, #deebf6 0, #dfeaf6 16%, #dbe6f8 20%, #e6ecfa 25%, #f1f1f1 28%, #f1f1f1 66%, #e2e6f7 71%, #dbdeef 75%, #dfeaf6 82%); }
  .weather { justify-self: start; gap: 8px; padding-left: 20px; text-align: left; }
  .weather small { display: block; font-size: 12px; color: #5d636b; }
  .apps { display: flex; align-items: center; }
  .app { position: relative; width: 44px; height: 46px; }
  .search { display: flex; align-items: center; width: 218px; height: 31px; margin: 0 2px 0 4px; padding: 0 13px 0 10px; border: 1px solid #dcdcdc; border-radius: 16px; background: #fbfbfb; }
  .search input { flex: 1; margin-left: 10px; font-size: 14px; line-height: 20px; }
  .search input::placeholder { color: #646464; }
  .running::after { content: ""; position: absolute; bottom: 2px; left: 19px; width: 6px; height: 3px; border-radius: 2px; background: #8a8a8a; }
  .focused { background: linear-gradient(#fbfbfb, #fbfbfb) center / 35px 39px no-repeat; }
  .focused::after { left: 14px; width: 16px; background: #0f73cf; }
  .app b { position: absolute; top: 4px; right: 5px; width: 16px; height: 16px; border-radius: 50%; background: #c42b1c; color: #fff; font-weight: 400; line-height: 16px; text-align: center; }
  .tray { display: flex; align-items: center; justify-self: end; padding-right: 20px; }
  .sync { margin: 0 14px 0 18px; }
  .status { gap: 7px; }
  .clock { flex-direction: column; align-items: flex-end; margin: 0 7px 0 11px; }
  .pilot { margin-left: 16px; }
</style>
